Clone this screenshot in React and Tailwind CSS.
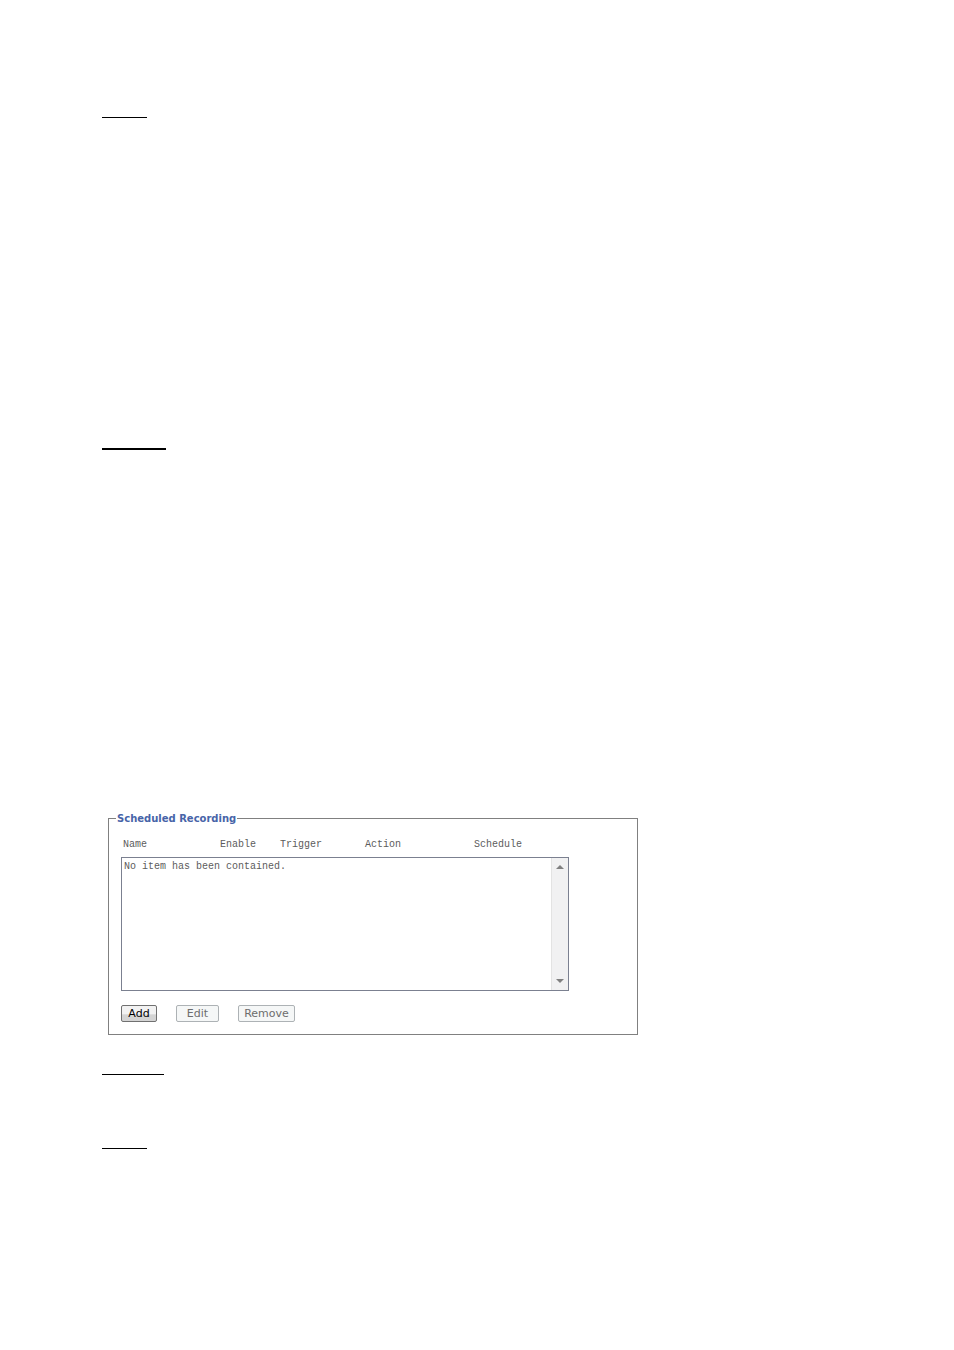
const columns = ["Name", "Enable", "Trigger", "Action", "Schedule"];

function Rule({ className }) {
  return <hr className={`border-0 bg-black ${className}`} />;
}

function ScrollBar() {
  return (
    <div className="flex w-[17px] flex-col justify-between border-l border-[#e3e3e3] bg-[#f1f1f2] pr-px pb-px">
      <button type="button" aria-label="Scroll up" className="flex h-[17px] items-center justify-center">
        <svg width="8" height="4" viewBox="0 0 8 4" className="mt-px">
          <path d="M4 0L8 4H0Z" fill="#808080" />
        </svg>
      </button>
      <button type="button" aria-label="Scroll down" className="flex h-[17px] items-center justify-center">
        <svg width="8" height="4" viewBox="0 0 8 4">
          <path d="M0 0H8L4 4Z" fill="#808080" />
        </svg>
      </button>
    </div>
  );
}

function ScheduledRecording() {
  return (
    <fieldset className="mt-[362px] ml-1.5 max-w-[530px] border border-[#808080] px-3 pb-3">
      <legend className="-ml-[5px] px-px text-[10px] leading-[13px] font-bold text-[#4764a8]">
        Scheduled Recording
      </legend>
      <div className="mt-[13px] grid grid-cols-[97px_60px_85px_109px_1fr] pl-0.5 font-['Liberation_Mono',monospace] text-[10px] leading-[14px] text-[#5c5c5c]">
        {columns.map((name) => (
          <span key={name}>{name}</span>
        ))}
      </div>
      <div className="mt-[5px] flex h-[134px] max-w-[448px] border border-[#7b8090]">
        <select
          size={8}
          aria-label="Scheduled recordings"
          className="min-w-0 flex-1 overflow-hidden bg-white font-['Liberation_Mono',monospace] text-[10px] leading-[14px] text-[#5c5c5c] outline-none"
        >
          <option className="min-h-0 px-0.5 pt-[3px]">No item has been contained.</option>
        </select>
        <ScrollBar />
      </div>
      <div className="mt-3.5 flex text-[11px] leading-[15px]">
        <button
          type="button"
          className="w-9 rounded-xs border border-[#707070] bg-linear-to-b from-[#f2f2f2] from-50% to-[#d4d4d4] to-60% text-black"
        >
          Add
        </button>
        <button
          type="button"
          disabled
          className="ml-[19px] w-[43px] rounded-xs border border-[#adb2b5] bg-[#f5f7f7] text-[#6d6d6d]"
        >
          Edit
        </button>
        <button
          type="button"
          disabled
          className="ml-[19px] w-[57px] rounded-xs border border-[#adb2b5] bg-[#f5f7f7] text-[#6d6d6d]"
        >
          Remove
        </button>
      </div>
    </fieldset>
  );
}

export default function App() {
  return (
    <main className="min-h-screen bg-white px-[102px] pt-[117px] font-['DejaVu_Sans',sans-serif]">
      <Rule className="h-px w-[45px]" />
      <Rule className="mt-[330px] h-0.5 w-16" />
      <ScheduledRecording />
      <Rule className="mt-[39px] h-px w-[62px]" />
      <Rule className="mt-[73px] h-px w-[45px]" />
    </main>
  );
}
